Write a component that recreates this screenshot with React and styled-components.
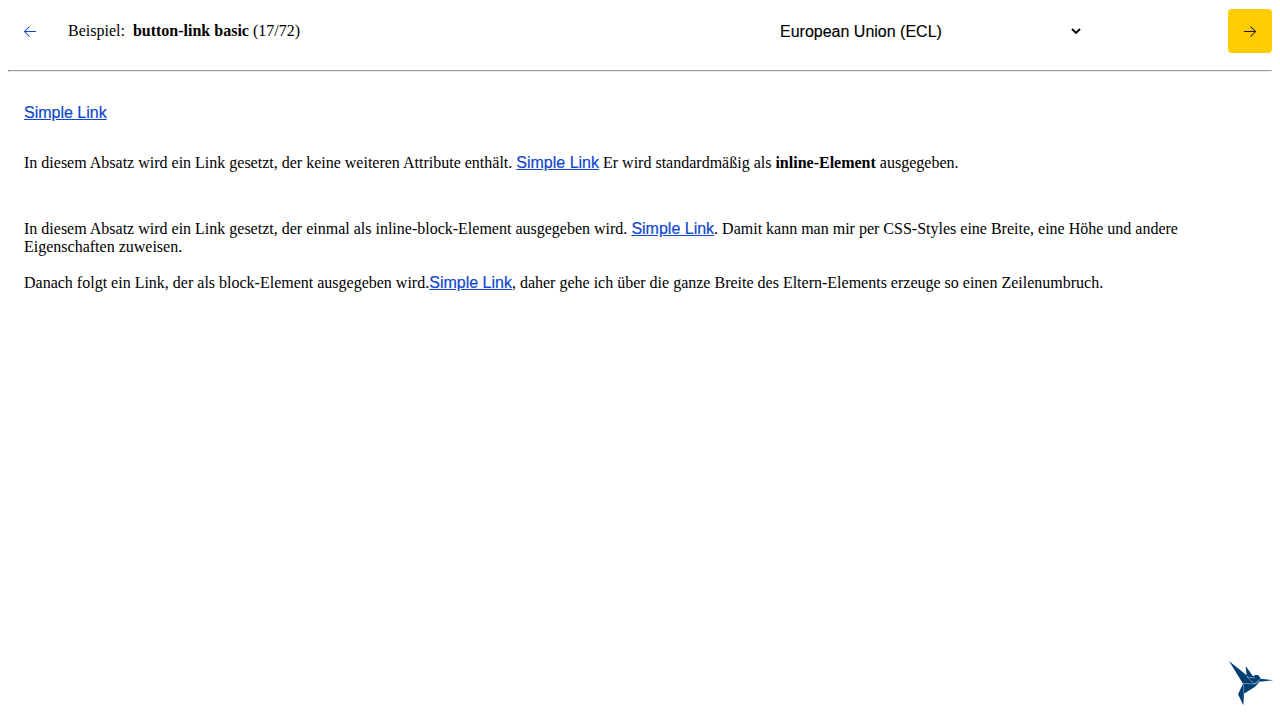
import React from 'react';
import styled, { createGlobalStyle } from 'styled-components';

const GlobalStyle = createGlobalStyle`
  body {
    margin: 8px;
    background: #fff;
    color: #000;
    font: 16px/18px "Liberation Serif", serif;
  }
`;

const Header = styled.header`
  display: grid;
  grid-template-columns: 44px 1fr 312px 140px 44px;
  align-items: center;
  height: 44px;
  padding-top: 1px;
`;

const IconButton = styled.button`
  display: flex;
  align-items: center;
  justify-content: center;
  width: 44px;
  height: 44px;
  padding: 0;
  border: 0;
  border-radius: 4px;
  background: ${(p) => (p.$primary ? '#ffcc00' : 'transparent')};
`;

const Title = styled.div`
  padding-left: 16px;
  white-space: pre;
`;

const ThemeSelect = styled.button`
  display: flex;
  align-items: center;
  justify-content: space-between;
  height: 44px;
  padding: 1px 7px 0 4px;
  border: 0;
  background: #fff;
  color: #000;
  font: 16px/19px "Liberation Sans", sans-serif;
  -webkit-text-stroke: 0.15px currentColor;
`;

const NextSlot = styled.div`
  grid-column: 5;
`;

const Divider = styled.hr`
  margin: 17px 0 0;
  border: 1px solid;
  border-color: #9a9a9a #eee #eee #9a9a9a;
`;

const Content = styled.main`
  padding: 32px 16px 0;
`;

const Paragraph = styled.p`
  margin: 0 0 ${(p) => p.$gap || 0}px;
`;

const Link = styled.a`
  color: #0e47cb;
  font-family: "Liberation Sans", sans-serif;
  line-height: 18px;
  text-decoration: underline;
  -webkit-text-stroke: 0.2px currentColor;
`;

const BirdLogo = styled.svg`
  position: fixed;
  right: 6px;
  bottom: 14px;
  width: 46px;
  height: 45px;
`;

const Arrow = ({ left }) => (
  <svg width="14" height="14" viewBox="0 0 14 14" fill="none" stroke={left ? '#0e47cb' : '#1a1a1a'} strokeWidth="1.05">
    {left ? <path d="M13 7.5H1.5M6.5 2.5l-5 5 5 5" /> : <path d="M1 7.5h11.5M7.5 2.5l5 5-5 5" />}
  </svg>
);

const Caret = () => (
  <svg width="10" height="8" viewBox="0 0 10 8" fill="none" stroke="#000" strokeWidth="1.9">
    <path d="M1 1l4 4 4-4" />
  </svg>
);

const SimpleLink = () => <Link href="#/back-page">Simple Link</Link>;

export default function App() {
  return (
    <>
      <GlobalStyle />
      <Header>
        <IconButton aria-label="zurück">
          <Arrow left />
        </IconButton>
        <Title>
          Beispiel:{'  '}
          <b>button-link basic</b> (17/72)
        </Title>
        <ThemeSelect>
          European Union (ECL)
          <Caret />
        </ThemeSelect>
        <NextSlot>
          <IconButton $primary aria-label="weiter">
            <Arrow />
          </IconButton>
        </NextSlot>
      </Header>
      <Divider />
      <Content>
        <Paragraph $gap={32}>
          <SimpleLink />
        </Paragraph>
        <Paragraph $gap={48}>
          In diesem Absatz wird ein Link gesetzt, der keine weiteren Attribute enthält. <SimpleLink /> Er wird
          standardmäßig als <b>inline-Element</b> ausgegeben.
        </Paragraph>
        <Paragraph $gap={18}>
          In diesem Absatz wird ein Link gesetzt, der einmal als inline-block-Element ausgegeben wird.{' '}
          <SimpleLink />. Damit kann man mir per CSS-Styles eine Breite, eine Höhe und andere Eigenschaften
          zuweisen.
        </Paragraph>
        <Paragraph>
          Danach folgt ein Link, der als block-Element ausgegeben wird.
          <SimpleLink />, daher gehe ich über die ganze Breite des Eltern-Elements erzeuge so einen
          Zeilenumbruch.
        </Paragraph>
      </Content>
      <BirdLogo viewBox="24 18 138 135" fill="#003e73">
        <path d="M27 18L80 61 77 33 99 64 106 60 114 60 123 71 160 76 119 80 105 95 72 116 70 151 54 118 69 86z" />
        <path
          d="M81 62L82 66 103 87 71 85M82 66L105 69M103 87L120 79M71 85L71 118M103 87L123 71"
          fill="none"
          stroke="#fff"
          strokeWidth="1.6"
          strokeOpacity=".75"
        />
      </BirdLogo>
    </>
  );
}
